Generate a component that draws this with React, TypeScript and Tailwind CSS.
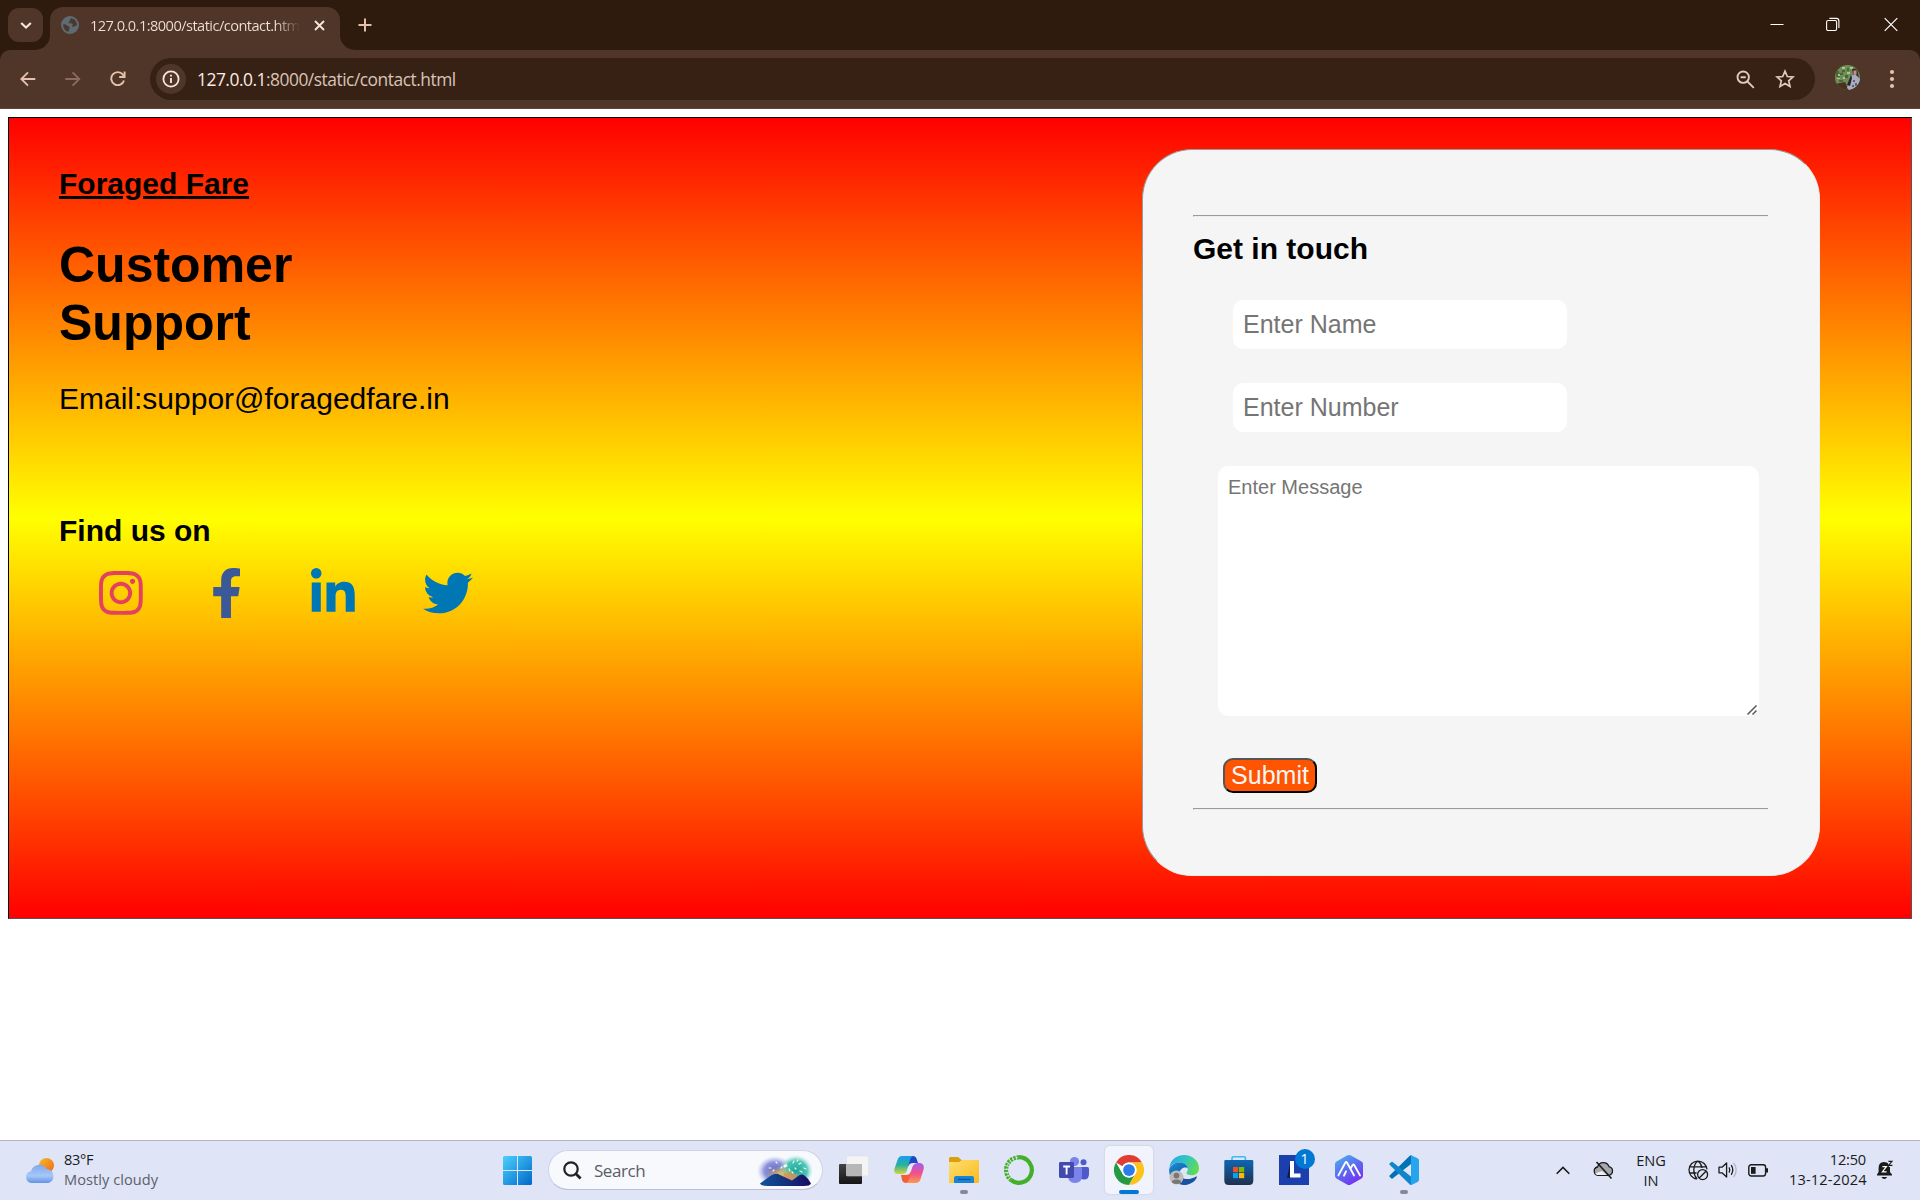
import type { ReactNode } from "react";
import { FaInstagram, FaFacebookF, FaLinkedinIn, FaTwitter } from "react-icons/fa";

const UI = "font-['Open_Sans','Noto_Sans',sans-serif]";

function TabStrip() {
  return (
    <div className="flex h-[50px] bg-[#2e1b0e]">
      <button className="ml-2 mt-2 flex h-[34px] w-[35px] items-center justify-center rounded-[11px] bg-[#4f3628]">
        <svg width="12" height="12" viewBox="0 0 12 12" fill="none" stroke="#f5e5dc" strokeWidth="2.2">
          <path d="M1.2 4 L6 8.6 L10.8 4" />
        </svg>
      </button>
      <svg className="-ml-2 mt-[35px]" width="15" height="15" viewBox="0 0 15 15">
        <path d="M0 15 A15 15 0 0 0 15 0 V15 Z" fill="#4f3628" />
      </svg>
      <div className="mt-[7px] flex h-[43px] w-[290px] items-center rounded-t-[13px] bg-[#4f3628] pb-[7px] pt-0">
        <svg className="ml-[11px]" width="18" height="18" viewBox="0 0 18 18">
          <circle cx="9" cy="9" r="9" fill="#5f6a73" />
          <path d="M2.2 8.2 C4.2 8 5.6 8.6 6.2 9.8 C7 10.4 8.4 10.2 8.6 11.6 C8.8 13 7.6 13.4 7.6 15.8 C4.2 15.2 2 12.2 2.2 8.2Z" fill="#4b382e" />
          <path d="M10.6 2.2 C9.2 3 8.4 3.6 8.8 4.8 C9.4 5.6 7.4 5.8 7.4 7 C8.6 7.8 10.8 7 11.6 8.2 C12 9.4 10.6 10 11.2 10.8 C12.8 10.8 14.6 10 15.9 9.2 C15.9 5.6 13.8 3 10.6 2.2Z" fill="#4b382e" />
        </svg>
        <div
          className={`${UI} ml-[11px] w-[210px] overflow-hidden whitespace-nowrap bg-linear-to-r from-[#f3e1d7] from-88% to-transparent bg-clip-text text-[14.6px] leading-5 tracking-[-0.54px] text-transparent`}
        >
          127.0.0.1:8000/static/contact.html
        </div>
        <svg className="ml-[13px]" width="13" height="13" viewBox="0 0 13 13" stroke="#f5e5dc" strokeWidth="1.9" fill="none">
          <path d="M2 2 L11 11 M11 2 L2 11" />
        </svg>
      </div>
      <svg className="mt-[35px]" width="15" height="15" viewBox="0 0 15 15">
        <path d="M15 15 A15 15 0 0 1 0 0 V15 Z" fill="#4f3628" />
      </svg>
      <svg className="ml-[3px] mt-[18px]" width="14" height="14" viewBox="0 0 14 14" stroke="#e6c0aa" strokeWidth="2" fill="none">
        <path d="M7 0.5 V13.5 M0.5 7 H13.5" />
      </svg>
      <div className="ml-auto mr-[22px] mt-[17px] flex">
        <svg className="mr-[42px]" width="14" height="14" viewBox="0 0 14 14">
          <path d="M0.5 7.5 H13.5" stroke="#fff" />
        </svg>
        <svg className="mr-[44px]" width="14" height="15" viewBox="0 0 14 15" fill="none" stroke="#fff" strokeWidth="1.1">
          <rect x="0.6" y="3.5" width="10" height="10" rx="1.5" />
          <path d="M3.4 1.4 H10.4 Q12.9 1.4 12.9 3.9 V11" />
        </svg>
        <svg width="14" height="15" viewBox="0 0 14 15" fill="none" stroke="#fff" strokeWidth="1.2">
          <path d="M0.7 1.2 L13.3 13.8 M13.3 1.2 L0.7 13.8" />
        </svg>
      </div>
    </div>
  );
}

function Toolbar() {
  return (
    <div className="bg-[#2e1b0e]">
      <div className="flex h-[59px] items-start rounded-t-[10px] border-b border-[#5d463a] bg-[#4f3628]">
        <svg className="ml-5 mt-[21px]" width="16" height="16" viewBox="0 0 16 16" fill="none" stroke="#e6c0aa" strokeWidth="1.9">
          <path d="M15.3 8 H1.8 M8 1.3 L1.3 8 L8 14.7" />
        </svg>
        <svg className="ml-[29px] mt-[21px]" width="16" height="16" viewBox="0 0 16 16" fill="none" stroke="#8b6c5c" strokeWidth="1.9">
          <path d="M0.3 8 H13.8 M7.6 1.3 L14.3 8 L7.6 14.7" />
        </svg>
        <svg className="ml-[29px] mt-[21px]" width="16" height="16" viewBox="0 0 16 16" fill="none" stroke="#e6c0aa" strokeWidth="1.9">
          <path d="M14 9.4 A6.5 6.5 0 1 1 12.9 3.6 L14.4 5.4 M14.6 0.5 V6 H9.2" />
        </svg>
        <div className="ml-6 mt-2 flex h-[42px] w-[1665px] items-center rounded-full bg-[#372114]">
          <div className="ml-[6px] flex size-[30px] items-center justify-center rounded-full bg-[#4f3628]">
            <svg width="18" height="18" viewBox="0 0 18 18" fill="none" stroke="#f5e5dc">
              <circle cx="9" cy="9" r="7.6" strokeWidth="1.8" />
              <path d="M9 8 V13" strokeWidth="1.9" />
              <path d="M9 4.8 V6.6" strokeWidth="1.9" />
            </svg>
          </div>
          <div className={`${UI} ml-[11px] text-[17.4px] leading-6 tracking-[-0.49px] text-[#d8c4b8]`}>
            <span className="text-[#fbece4]">127.0.0.1</span>:8000/static/contact.html
          </div>
          <svg className="ml-auto mr-5" width="19" height="19" viewBox="0 0 19 19" fill="none" stroke="#e0c9be" strokeWidth="1.9">
            <circle cx="7.2" cy="7.2" r="5.7" />
            <path d="M11.3 11.3 L17.8 17.8 M4.6 7.2 H9.8" />
          </svg>
          <svg className="mr-5" width="20" height="20" viewBox="0 0 20 20" fill="none" stroke="#e0c9be" strokeWidth="1.7">
            <path d="M10 2.2 L12.3 7.5 L18 8 L13.7 11.8 L15 17.4 L10 14.4 L5 17.4 L6.3 11.8 L2 8 L7.7 7.5 Z" />
          </svg>
        </div>
        <svg className="ml-5 mt-[15px]" width="25" height="25" viewBox="0 0 25 25">
          <clipPath id="avatar">
            <circle cx="12.5" cy="12.5" r="12.5" />
          </clipPath>
          <g clipPath="url(#avatar)">
            <rect width="25" height="25" fill="#6f8d55" />
            <path d="M1 6h3v2h3V5h3v2h-2v3H5v2H1zM12 3h2v3h-2zM10 10h3v3h-3zM4 15h4v2H4z" fill="#48683a" />
            <path d="M3 9h2v2H3zM8 12h2v2H8zM2 13h3v1H2zM15 2h3v2h-3zM7 2h3v2H7zM12 7h3v2h-3z" fill="#a9c48d" />
            <path d="M0 19 L10 17 L14 25 H0z" fill="#4c2f1c" />
            <path d="M17 4 Q22 2 23 8 L24 14 L19 13 Z" fill="#3b2a2e" />
            <path d="M18.5 5.5h3v4h-3z" fill="#c98f86" />
            <path d="M15 12 L20 9 L25 14 V22 L14 25 L12 23 Z" fill="#a9acbd" />
            <path d="M16 10 L17 13 L15 21 L12 20 Z" fill="#26222c" />
            <path d="M18 15h2v2h-2zM20 18h2v3h-2zM17 20h2v2h-2z" fill="#5f6077" />
          </g>
        </svg>
        <svg className="ml-[29px] mt-[19px]" width="6" height="20" viewBox="0 0 6 20" fill="#e6c0aa">
          <circle cx="3" cy="3" r="2.1" />
          <circle cx="3" cy="10" r="2.1" />
          <circle cx="3" cy="17" r="2.1" />
        </svg>
      </div>
    </div>
  );
}

function ContactPage() {
  return (
    <main className="h-[1031px] bg-white px-2 pt-2 font-['Liberation_Sans',Arial,sans-serif] text-black">
      <section className="flex h-[802px] w-[1904px] justify-between border border-t-black border-l-black border-b-[#555] border-r-[#555] bg-[linear-gradient(to_bottom,red,yellow,red)]">
        <div className="pl-[50px] pt-[49px]">
          <h2 className="text-[30px] font-bold leading-[34px] underline">Foraged Fare</h2>
          <h1 className="mt-[35px] w-[300px] text-[50px] font-bold leading-[58px]">Customer Support</h1>
          <p className="mt-[30px] text-[30px] leading-[34px]">Email:suppor@foragedfare.in</p>
          <h3 className="mt-[98px] text-[30px] font-bold leading-[34px]">Find us on</h3>
          <div className="ml-10 mt-5 flex gap-[68.4px]">
            <FaInstagram className="h-[50px] w-[43.75px] text-[#e4405f]" />
            <FaFacebookF className="h-[50px] w-[31.25px] text-[#3b5998]" />
            <FaLinkedinIn className="h-[50px] w-[43.75px] text-[#0077b5]" />
            <FaTwitter className="size-[50px] text-[#0077b5]" />
          </div>
        </div>
        <div className="mr-[91px] mt-[31px] h-[727px] w-[678px] rounded-[50px] border border-t-[#9a9a9a] border-l-[#9a9a9a] border-b-[#eee] border-r-[#eee] bg-[#f5f5f5] pl-[50px] pr-[51px] pt-[65px]">
          <div className="h-[2px] border-b border-l border-t border-[#eee] border-l-[#9a9a9a] border-t-[#9a9a9a]" />
          <h2 className="mt-[15px] text-[30px] font-bold leading-[34px]">Get in touch</h2>
          <form className="flex flex-col items-start">
            <input
              placeholder="Enter Name"
              className="ml-10 mt-[34px] h-[49px] w-[334px] rounded-[10px] bg-white px-[10px] text-[25px] placeholder:text-[#757575]"
            />
            <input
              placeholder="Enter Number"
              className="ml-10 mt-[34px] h-[49px] w-[334px] rounded-[10px] bg-white px-[10px] text-[25px] placeholder:text-[#757575]"
            />
            <div className="relative ml-[25px] mt-[34px] h-[250px] w-[541px]">
              <textarea
                placeholder="Enter Message"
                className="block h-full w-full resize-none rounded-[10px] bg-white p-[10px] text-[20px] leading-[23px] placeholder:text-[#757575]"
              />
              <svg className="absolute bottom-px right-0.5" width="10" height="10" viewBox="0 0 10 10" stroke="#58585c" strokeWidth="1.5">
                <path d="M0.5 9.5 L9.5 0.5 M5.5 9.5 L9.5 5.5" />
              </svg>
            </div>
            <button
              type="button"
              className="ml-[30px] mt-[42px] h-[35px] w-[94px] rounded-[10px] border-2 border-b-black border-l-[#555] border-r-black border-t-[#555] bg-[#ff5400] text-[25px] leading-[29px] text-[#f5f5f5]"
            >
              Submit
            </button>
          </form>
          <div className="mt-[15px] h-[2px] border-b border-l border-t border-[#eee] border-l-[#9a9a9a] border-t-[#9a9a9a]" />
        </div>
      </section>
    </main>
  );
}

function AppSlot({ children, state }: { children: ReactNode; state?: "open" | "active" }) {
  return (
    <div className="flex h-full w-[55px] shrink-0 justify-center pt-[5px]">
      <div
        className={
          state === "active"
            ? "flex h-[48px] w-[48px] flex-col items-center rounded-[5px] bg-[#f1f4fc] shadow-[0_0_1px_1px_#d5d9ea]"
            : "flex h-[48px] w-[48px] flex-col items-center"
        }
      >
        <div className="mt-[9px] size-[30px]">{children}</div>
        {state === "open" && <div className="mt-[5px] h-1 w-2 rounded-full bg-[#868994]" />}
        {state === "active" && <div className="mt-[5px] h-1 w-5 rounded-full bg-[#0078d4]" />}
      </div>
    </div>
  );
}

function Defs() {
  return (
    <defs>
      <linearGradient id="win" x1="0" y1="0" x2="1" y2="1"><stop stopColor="#4cd0fb" /><stop offset="1" stopColor="#0068ca" /></linearGradient>
      <linearGradient id="cloud" x1="0" y1="0" x2="0" y2="1"><stop stopColor="#7fa9ee" /><stop offset="0.6" stopColor="#a6c8f7" /><stop offset="1" stopColor="#6492e6" /></linearGradient>
      <linearGradient id="sun" x1="0" y1="0" x2="1" y2="1"><stop stopColor="#f9b82c" /><stop offset="1" stopColor="#ec6a13" /></linearGradient>
    </defs>
  );
}

function SearchArt() {
  return (
    <svg className="ml-auto mr-2 mt-[4px]" width="58" height="34" viewBox="0 0 58 34">
      <defs>
        <radialGradient id="sa1"><stop stopColor="#5a63c8" /><stop offset="0.6" stopColor="#8f94dc" /><stop offset="1" stopColor="#b9bdf0" stopOpacity="0" /></radialGradient>
        <radialGradient id="sa2"><stop stopColor="#1aa79b" /><stop offset="0.65" stopColor="#4cc6b8" /><stop offset="1" stopColor="#a5e6dd" stopOpacity="0" /></radialGradient>
        <radialGradient id="sa3"><stop stopColor="#e9c14f" /><stop offset="1" stopColor="#d9b35e" stopOpacity="0" /></radialGradient>
        <linearGradient id="sa4"><stop stopColor="#12549b" /><stop offset="0.6" stopColor="#142c79" /><stop offset="1" stopColor="#190a60" /></linearGradient>
      </defs>
      <ellipse cx="19" cy="16" rx="18" ry="15" fill="url(#sa1)" />
      <ellipse cx="40" cy="16" rx="17" ry="16" fill="url(#sa2)" />
      <ellipse cx="24" cy="19" rx="14" ry="8" fill="url(#sa3)" />
      <path d="M28 18 L42 19 L37 28 L28 26Z" fill="#f08a4b" opacity="0.75" />
      <path d="M4 28.5 Q10 24 15 20.5 Q20 17.5 24 20 L36 25.5 L43 20.5 Q46 18.5 49 21 Q53 24 55 28.5 Q54 31 48 31 L12 31 Q5 31 4 28.5Z" fill="url(#sa4)" />
      <g stroke="#fff6d8" strokeWidth="1.2" strokeLinecap="round">
        <path d="M30 9l1 2M33 14l1 2M26 12l-1 1M37 8l1-2M43 9l2-1M48 13l2 1M20 7l1 1M15 13l-2 0M39 13l1 1M36 17l1 1M44 16l2 1M18 15l-1 1M41 6l1-1" />
      </g>
      <circle cx="29" cy="11" r="1.6" fill="#fff" />
    </svg>
  );
}

function TaskViewIcon() {
  return (
    <svg width="30" height="30" viewBox="0 0 30 30">
      <defs>
        <linearGradient id="tv" x1="0" y1="0" x2="0" y2="1"><stop stopColor="#434343" /><stop offset="1" stopColor="#151515" /></linearGradient>
      </defs>
      <rect x="0" y="9" width="23" height="20" rx="1" fill="url(#tv)" />
      <rect x="7.5" y="1" width="22.2" height="20" rx="1" fill="#f4f4f4" stroke="#d8d9de" strokeWidth="0.5" />
      <path d="M7.5 9H23V21H7.5Z" fill="#b7b7b7" />
    </svg>
  );
}

function CopilotIcon() {
  return (
    <svg width="30" height="30" viewBox="0 0 30 30">
      <defs>
        <linearGradient id="cp1" x1="0" y1="0" x2="0" y2="1"><stop stopColor="#1c9df0" /><stop offset="0.5" stopColor="#27b29c" /><stop offset="1" stopColor="#d9d33a" /></linearGradient>
        <linearGradient id="cp2" x1="0" y1="0" x2="0" y2="1"><stop stopColor="#a65df2" /><stop offset="0.5" stopColor="#ef4f8d" /><stop offset="1" stopColor="#fb9a4b" /></linearGradient>
      </defs>
      <path d="M13 1 H19 Q22 1 23 5 L24 8 H19 Q15 8 14 12 Z" fill="#1e47c4" />
      <path d="M17 28 H12 Q9 28 8 25 L7 20 H12 Q16 20 17 16 Z" fill="#f45d3c" />
      <path d="M8 1 H20 Q17 1 16 5 L13 15 Q12 19 8 19 H4 Q-0.5 19 0.4 14 L3.5 5 Q4.7 1 8 1Z" fill="url(#cp1)" />
      <path d="M22 28 H11 Q14 28 15 24 L18 13 Q19 9 23 8 H26 Q30.6 9 29.7 14 L26.6 24 Q25.4 28 22 28Z" fill="url(#cp2)" />
      <path d="M16.5 10.5 H18.5 L15.5 18.5 H12.5 L14 13 Q14.8 10.5 16.5 10.5Z" fill="#e6e9f7" />
    </svg>
  );
}

function FolderIcon() {
  return (
    <svg width="30" height="30" viewBox="0 0 30 30">
      <defs>
        <linearGradient id="fo" x1="0" y1="0" x2="1" y2="1"><stop stopColor="#ffdf70" /><stop offset="1" stopColor="#f9b91d" /></linearGradient>
      </defs>
      <path d="M0 3.5 Q0 2 1.5 2 H9 L12.5 5 H28.5 Q30 5 30 6.5 V12 H0Z" fill="#dd9d0c" />
      <path d="M0 7 H10 L13 5 H28.5 Q30 5 30 6.5 V27 Q30 28 29 28 H1 Q0 28 0 27Z" fill="url(#fo)" />
      <path d="M5 28 V23 Q5 21 7 21 H23 Q25 21 25 23 V28Z" fill="#1784d8" />
      <path d="M9 24.4 H21.5" stroke="#0c559f" strokeWidth="1.2" />
    </svg>
  );
}

function AnacondaIcon() {
  return (
    <svg width="30" height="30" viewBox="0 0 30 30" fill="none" stroke="#43b02a">
      <path d="M15 2.2 A12.8 12.8 0 1 1 7 25" strokeWidth="4.2" />
      <path d="M15 2.4 A12.6 12.6 0 0 0 7 25" strokeWidth="4.2" strokeDasharray="2.4 0.9" />
      <path d="M14 2.6 A12.4 12.4 0 0 0 5 22" strokeWidth="0.9" stroke="#e0e4f6" strokeDasharray="2 2" />
    </svg>
  );
}

function TeamsIcon() {
  return (
    <svg width="30" height="30" viewBox="0 0 30 30">
      <circle cx="24.5" cy="7.3" r="3" fill="#5059c9" />
      <path d="M20 12 H28.5 Q30 12 30 13.5 V19 Q30 24.5 25 24.5 Q21 24.5 20 21Z" fill="#5059c9" />
      <circle cx="15.5" cy="6.5" r="4.6" fill="#7b83eb" />
      <path d="M9 12 H21.5 Q23 12 23 13.5 V20.5 Q23 28 16 28 Q9 28 9 20.5Z" fill="#7b83eb" />
      <rect x="0" y="7" width="15" height="16" rx="1.4" fill="#434aae" />
      <path d="M4.2 11.5 H11 M7.6 11.5 V19.5" stroke="#fff" strokeWidth="1.9" fill="none" />
    </svg>
  );
}

function ChromeIcon() {
  return (
    <svg width="30" height="30" viewBox="0 0 48 48">
      <circle cx="24" cy="24" r="24" fill="#fff" />
      <path d="M3.2 12 A24 24 0 0 1 44.8 12 H24 A12 12 0 0 0 13.6 18Z" fill="#e03c31" />
      <path d="M3.2 12 A24 24 0 0 0 24 48 L34.4 30 A12 12 0 0 1 13.6 30 Z" fill="#249a44" />
      <path d="M24 48 A24 24 0 0 0 44.8 12 H24 A12 12 0 0 1 34.4 30 Z" fill="#fcc31c" />
      <circle cx="24" cy="24" r="12" fill="#fff" />
      <circle cx="24" cy="24" r="9.4" fill="#2a7cec" />
    </svg>
  );
}

function EdgeIcon() {
  return (
    <svg width="30" height="30" viewBox="0 0 30 30">
      <defs>
        <linearGradient id="ed1" x1="0" y1="0.2" x2="1" y2="0.5"><stop stopColor="#2ba9e0" /><stop offset="0.5" stopColor="#30c5c5" /><stop offset="1" stopColor="#62db52" /></linearGradient>
        <linearGradient id="ed2" x1="0" y1="0" x2="0.6" y2="1"><stop stopColor="#1e90dc" /><stop offset="1" stopColor="#0e4a92" /></linearGradient>
      </defs>
      <path d="M0.3 13 C1.2 5 7.5 0 15 0 C23.5 0 30 6 30 13.2 C30 17.6 26.6 20.3 22.8 20.3 C19.5 20.3 17.4 19.2 17.4 18 C17.4 17.2 18.9 16.6 18.9 14 C18.9 10 14.8 7.4 10 7.4 C5.5 7.4 2 9.7 0.3 13Z" fill="url(#ed1)" />
      <path d="M0.2 14 C2 9.8 5.8 7.4 10 7.4 C15 7.4 18.9 10 18.9 14 C18 11.5 11.5 12 10.5 18 C10 23 15 27.5 20 26.5 L17 29.8 C7.5 31 -0.8 23.5 0.2 14Z" fill="url(#ed2)" />
      <path d="M10.4 18 C11 24.5 20 26 27.6 21.2 C29 22.5 24 30 15 30 C10 28 9.5 22 10.4 18Z" fill="#17539f" />
      <circle cx="7.5" cy="22.5" r="7" fill="#bebcba" />
      <circle cx="7.5" cy="20.6" r="2.9" fill="#797673" />
      <path d="M2.8 27.2 Q3 24.6 7.5 24.6 Q12 24.6 12.2 27.2 Q7.5 31 2.8 27.2Z" fill="#797673" />
    </svg>
  );
}

function StoreIcon() {
  return (
    <svg width="30" height="30" viewBox="0 0 30 30">
      <defs>
        <linearGradient id="st" x1="0" y1="0" x2="0" y2="1"><stop stopColor="#0d66b4" /><stop offset="1" stopColor="#203050" /></linearGradient>
      </defs>
      <path d="M8 7 V3 Q8 1.7 9.5 1.7 H20 Q21.4 1.7 21.4 3 V7" fill="none" stroke="#35bdf0" strokeWidth="1.6" />
      <path d="M1.3 5 H28 Q29.3 5 29.3 6.4 V25.5 Q29.3 30 25 30 H4.8 Q0.3 30 0.3 25.5 V6.4 Q0.3 5 1.3 5Z" fill="url(#st)" />
      <path d="M9 12h5.2v5.2H9z" fill="#f25022" />
      <path d="M15 12h5.2v5.2H15z" fill="#7fba00" />
      <path d="M9 18h5.2v5.2H9z" fill="#00a4ef" />
      <path d="M15 18h5.2v5.2H15z" fill="#ffb900" />
    </svg>
  );
}

function LensIcon() {
  return (
    <div className="relative size-[30px] bg-[#1c3fae]">
      <svg width="30" height="30" viewBox="0 0 30 30">
        <path d="M8 23 L11.5 6 V23 Z" fill="#0d1f48" />
        <path d="M11 6 H15 V18.6 H21.5 V22.4 H11Z" fill="#fff" />
      </svg>
      <div className={`${UI} absolute -top-[6px] left-4 flex size-5 items-center justify-center rounded-full bg-[#0078d4] text-[14px] leading-5 text-white`}>1</div>
    </div>
  );
}

function HexIcon() {
  return (
    <svg width="30" height="30" viewBox="0 0 30 30">
      <defs>
        <linearGradient id="hx" x1="0.1" y1="0" x2="0.7" y2="1"><stop stopColor="#4fb2ec" /><stop offset="0.5" stopColor="#5a6df0" /><stop offset="1" stopColor="#7a2df2" /></linearGradient>
      </defs>
      <path d="M15 0 Q16 0 17 0.6 L27.5 6.6 Q29 7.5 29 9 V21 Q29 22.5 27.5 23.4 L17 29.4 Q15 30.5 13 29.4 L2.5 23.4 Q1 22.5 1 21 V9 Q1 7.5 2.5 6.6 L13 0.6 Q14 0 15 0Z" fill="url(#hx)" />
      <path d="M4.4 20.4 L11.4 7.6 Q12.2 6.4 13 7.6 L20 20.4 M10 20.6 L12 16.4 M16.6 13.4 L18.6 10 Q19.4 9 20.2 10 L26 20.4" fill="none" stroke="#fff" strokeWidth="1.9" strokeLinecap="round" />
    </svg>
  );
}

function CodeIcon() {
  return (
    <svg width="30" height="30" viewBox="0 0 30 30">
      <path d="M22 9 L3.6 23.4 Q3 23.9 2.4 23.4 L0.6 21.8 Q0 21.2 0.6 20.6 L20.8 0.8 Q21.6 0.1 22.5 0.2Z" fill="#0073b7" />
      <path d="M22 21.4 L3.6 7 Q3 6.5 2.4 7 L0.6 8.6 Q0 9.2 0.6 9.8 L20.8 29.4 Q21.6 30 22.5 30Z" fill="#0f86cb" />
      <path d="M22 0.2 L28.6 3.2 Q30 4 30 5.4 V24.8 Q30 26.2 28.6 27 L22.4 29.9 Q21.4 30.2 20.8 29.4 Q22 30 22 28.4 V1.8 Q22 0.2 20.8 0.8 Q21.4 0 22 0.2Z" fill="#27a4ee" />
    </svg>
  );
}

function Taskbar() {
  return (
    <footer className={`${UI} flex h-[60px] border-t border-[#b2b5c6] bg-[#dfe4f6] text-[#1b1b1b]`}>
      <div className="flex w-[503px] pl-[25px]">
        <svg className="mt-4" width="30" height="27" viewBox="0 0 30 27">
          <Defs />
          <circle cx="21.5" cy="8.5" r="7.5" fill="url(#sun)" />
          <path d="M6 26 A6 6 0 0 1 6 14.2 A8.5 8.5 0 0 1 21.5 12 A7.2 7.2 0 0 1 23.5 26 Z" fill="url(#cloud)" />
        </svg>
        <div className="ml-[9px] mt-2 text-[14.6px] leading-5">
          <div className="tracking-[-0.3px]">83°F</div>
          <div className="tracking-[0.05px] text-[#5c5f69]">Mostly cloudy</div>
        </div>
      </div>
      <svg className="mt-[15px] shrink-0" width="29" height="29" viewBox="0 0 29 29" fill="url(#win)">
        <path d="M1.5 0H14V14H0V1.5Q0 0 1.5 0ZM15 0H27.5Q29 0 29 1.5V14H15ZM0 15H14V29H1.5Q0 29 0 27.5ZM15 15H29V27.5Q29 29 27.5 29H15Z" />
      </svg>
      <div className="ml-4 mt-[9px] flex h-[40px] w-[275px] shrink-0 rounded-full border border-[#cdd3e8] border-b-[#b9bed4] bg-[#f8f9fd]">
        <svg className="ml-[14px] mt-[10px]" width="19" height="19" viewBox="0 0 19 19" fill="none" stroke="#222" strokeWidth="2.2">
          <circle cx="8" cy="8" r="6.7" />
          <path d="M12.8 12.8 L17.6 17.6" strokeWidth="2.8" />
        </svg>
        <span className="ml-3 mt-2 text-[17px] leading-6 tracking-[-0.45px] text-[#5a5c64]">Search</span>
        <SearchArt />
      </div>
      <div className="ml-[3px] flex">
        <AppSlot><TaskViewIcon /></AppSlot>
        <AppSlot><CopilotIcon /></AppSlot>
        <AppSlot state="open"><FolderIcon /></AppSlot>
        <AppSlot><AnacondaIcon /></AppSlot>
        <AppSlot><TeamsIcon /></AppSlot>
        <AppSlot state="active"><ChromeIcon /></AppSlot>
        <AppSlot><EdgeIcon /></AppSlot>
        <AppSlot><StoreIcon /></AppSlot>
        <AppSlot><LensIcon /></AppSlot>
        <AppSlot><HexIcon /></AppSlot>
        <AppSlot state="open"><CodeIcon /></AppSlot>
      </div>
      <div className="ml-auto mr-[26px] flex">
        <svg className="mr-[23px] mt-[25px]" width="14" height="9" viewBox="0 0 14 9" fill="none" stroke="#1b1b1b" strokeWidth="1.6">
          <path d="M0.7 7.7 L7 1.4 L13.3 7.7" />
        </svg>
        <svg className="mr-[20px] mt-5" width="21" height="19" viewBox="0 0 21 19" stroke="#1b1b1b">
          <path d="M5 14.3 A4.2 4.2 0 0 1 4.6 6 A6 6 0 0 1 16 5.6 A4.5 4.5 0 0 1 16.3 14.3 Z" fill="#a6a8ae" strokeWidth="1.3" />
          <path d="M2 12.5 L9 10 L14 14 H4Z" fill="#efefef" stroke="none" />
          <path d="M3.5 1 L18.5 17.5" strokeWidth="1.6" />
        </svg>
        <div className="mr-[20px] mt-[9px] w-[34px] text-center text-[14.6px] leading-5 tracking-[-0.1px]">
          <div>ENG</div>
          <div>IN</div>
        </div>
        <svg className="mr-[9px] mt-[19px]" width="21" height="21" viewBox="0 0 21 21" fill="none" stroke="#1b1b1b" strokeWidth="1.3">
          <path d="M9 19 A9 9 0 1 1 19 9.4 M1 6.8 H18.6 M1 13 H8.6 M9 19 Q5.8 15 5.8 10 Q5.8 4 9.9 1 Q13.4 3.4 14 8" />
          <circle cx="14.6" cy="14.6" r="5" />
          <path d="M11.2 18 L18 11.2" />
        </svg>
        <svg className="mr-[9px] mt-5" width="21" height="18" viewBox="0 0 21 18" fill="none" stroke="#1b1b1b" strokeWidth="1.3">
          <path d="M1 6.2 H4 L8.6 2 V16 L4 11.8 H1Z" strokeLinejoin="round" />
          <path d="M11 6.4 Q12.6 9 11 11.6 M13.2 4.2 Q16.4 9 13.2 13.8" />
          <path d="M15.6 2 Q20.8 9 15.6 16" stroke="#b4b8c8" />
        </svg>
        <svg className="mr-[20px] mt-[23px]" width="21" height="13" viewBox="0 0 21 13" fill="none" stroke="#1b1b1b">
          <rect x="0.8" y="0.8" width="16.8" height="11.2" rx="2.4" strokeWidth="1.4" />
          <rect x="3" y="3" width="4.6" height="6.8" fill="#1b1b1b" stroke="none" />
          <path d="M19 4.2 V8.6" strokeWidth="2" />
        </svg>
        <div className="w-[77px] whitespace-nowrap pt-2 text-right text-[14.6px] leading-5">
          <div className="tracking-[-0.2px]">12:50</div>
          <div className="tracking-[0.15px]">13-12-2024</div>
        </div>
        <svg className="ml-[10px] mt-[19px]" width="18" height="20" viewBox="0 0 18 20">
          <path d="M1 15.5 V14.4 L2.6 12 V8 Q2.6 2 8 2 Q14 2 14 8 V12 L16 14.4 V15.5Z" fill="#1b1b1b" />
          <path d="M5.4 17 H11.2 Q10 19 8.3 19 Q6.4 19 5.4 17Z" fill="#1b1b1b" />
          <path d="M11 0 H18 V6 L13 7Z" fill="#dfe4f6" />
          <path d="M12.4 1.4 H16 L12.4 5.4 H16.4" fill="none" stroke="#1b1b1b" strokeWidth="1.1" />
          <path d="M6.4 6.6 H10.4 L6.4 11.8 H10.6" fill="none" stroke="#fff" strokeWidth="1.2" />
        </svg>
      </div>
    </footer>
  );
}

export default function App() {
  return (
    <div className="flex h-[1200px] w-[1920px] flex-col overflow-hidden bg-white">
      <TabStrip />
      <Toolbar />
      <ContactPage />
      <Taskbar />
    </div>
  );
}
